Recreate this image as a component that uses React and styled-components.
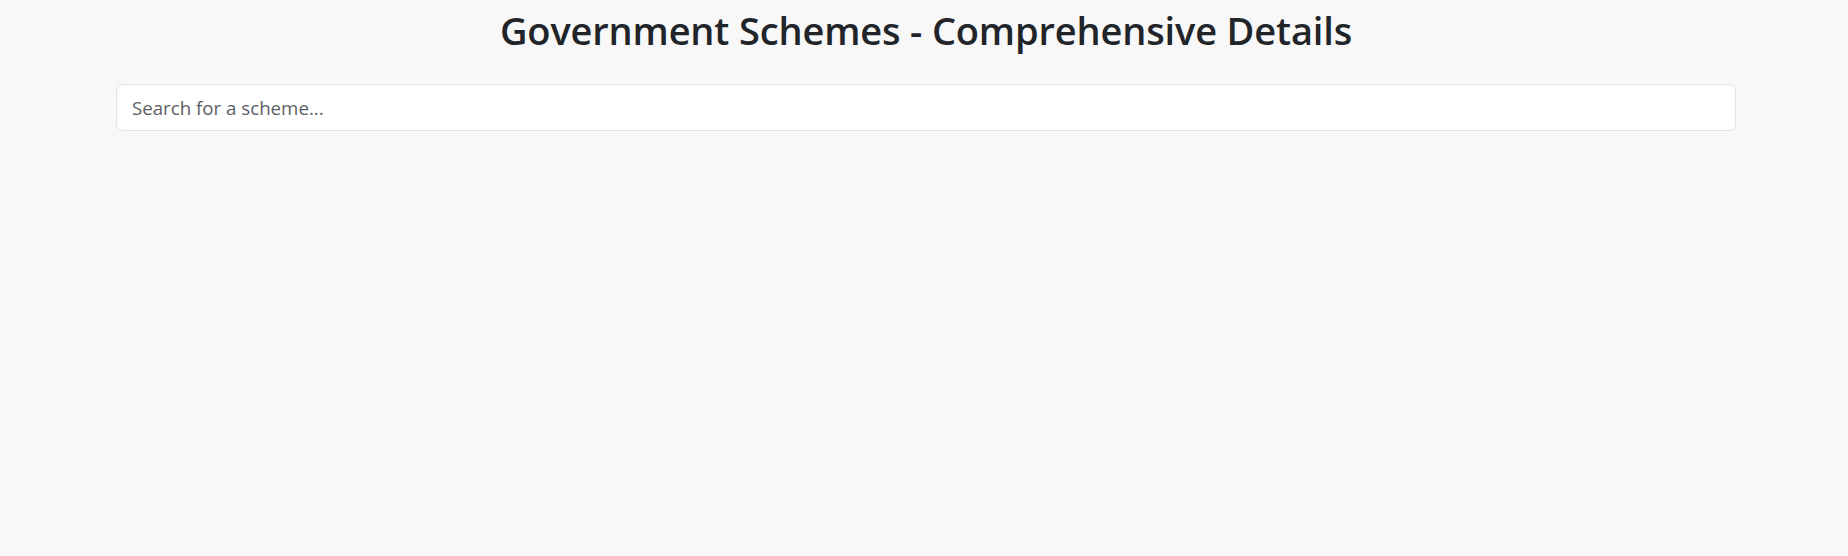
import styled, { createGlobalStyle } from "styled-components";
import { useState } from "react";

const GlobalStyle = createGlobalStyle`
  html, body {
    margin: 0;
    background-color: #f8f8f8;
    color: #212529;
    font-family: "Open Sans", "Noto Sans", sans-serif;
  }
`;

export default function App() {
  const [query, setQuery] = useState("");

  return (
    <>
      <GlobalStyle />
      <Page>
        <Container>
          <Title>Government Schemes - Comprehensive Details</Title>
          <SearchInput
            type="text"
            placeholder="Search for a scheme..."
            value={query}
            onChange={(event) => setQuery(event.target.value)}
          />
        </Container>
      </Page>
    </>
  );
}

const Page = styled.div`
  min-height: 556px;
  padding-left: 4px;
  box-sizing: border-box;
`;

const Container = styled.main`
  max-width: 1620px;
  margin: 0 auto;
  display: flex;
  flex-direction: column;
  align-items: stretch;
`;

const Title = styled.h2`
  margin: 0 0 31px;
  padding-top: 7px;
  text-align: center;
  font-size: 38px;
  font-weight: 600;
  line-height: 46px;
  letter-spacing: -0.15px;
`;

const SearchInput = styled.input`
  box-sizing: border-box;
  width: 100%;
  height: 47px;
  padding: 0 15px;
  border: 1px solid #dee2e6;
  border-radius: 7px;
  background-color: #fff;
  font-family: "Open Sans", "Noto Sans", sans-serif;
  font-size: 18.7px;
  color: #212529;
  outline: none;

  &::placeholder {
    color: #5c6064;
  }
`;
